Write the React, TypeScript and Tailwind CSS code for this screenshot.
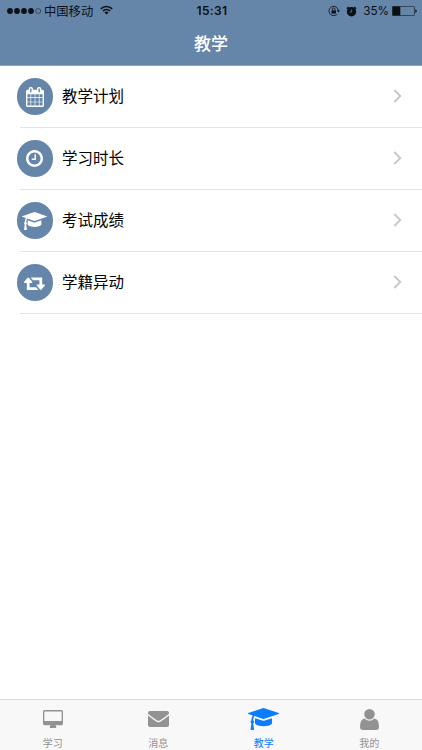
import React, { useState } from 'react';
import clsx from 'clsx';

type IconName = 'calendar' | 'clock' | 'cap' | 'retweet' | 'desktop' | 'envelope' | 'user';

const icons: Record<IconName, { viewBox: string; path: string }> = {
  calendar: {
    viewBox: '64 0 1664 1792',
    path: 'M192 1664h288v-288h-288v288zm352 0h320v-288h-320v288zm-352-352h288v-320h-288v320zm352 0h320v-320h-320v320zm-352-384h288v-288h-288v288zm736 736h320v-288h-320v288zm-384-736h320v-288h-320v288zm768 736h288v-288h-288v288zm-384-352h320v-320h-320v320zm-352-864v-288q0-13-9.5-22.5t-22.5-9.5h-64q-13 0-22.5 9.5t-9.5 22.5v288q0 13 9.5 22.5t22.5 9.5h64q13 0 22.5-9.5t9.5-22.5zm736 864h288v-320h-288v320zm-384-384h320v-288h-320v288zm384 0h288v-288h-288v288zm32-480v-288q0-13-9.5-22.5t-22.5-9.5h-64q-13 0-22.5 9.5t-9.5 22.5v288q0 13 9.5 22.5t22.5 9.5h64q13 0 22.5-9.5t9.5-22.5zm384-64v1280q0 52-38 90t-90 38h-1408q-52 0-90-38t-38-90v-1280q0-52 38-90t90-38h128v-96q0-66 47-113t113-47h64q66 0 113 47t47 113v96h384v-96q0-66 47-113t113-47h64q66 0 113 47t47 113v96h128q52 0 90 38t38 90z',
  },
  clock: {
    viewBox: '128 128 1536 1536',
    path: 'M1024 544v448q0 14-9 23t-23 9h-320q-14 0-23-9t-9-23v-64q0-14 9-23t23-9h224v-352q0-14 9-23t23-9h64q14 0 23 9t9 23zm416 352q0-148-73-273t-198-198-273-73-273 73-198 198-73 273 73 273 198 198 273 73 273-73 198-198 73-273zm224 0q0 209-103 385.5t-279.5 279.5-385.5 103-385.5-103-279.5-279.5-103-385.5 103-385.5 279.5-279.5 385.5-103 385.5 103 279.5 279.5 103 385.5z',
  },
  cap: {
    viewBox: '0 128 2304 1536',
    path: 'M1774 836l18 316q4 69-82 128t-235 93.5-323 34.5-323-34.5-235-93.5-82-128l18-316 574 181q22 7 48 7t48-7zm530-324q0 23-22 31l-1120 352q-4 1-10 1t-10-1l-652-206q-43 34-71 111.5t-34 178.5q63 36 63 109 0 69-58 107l58 433q2 14-8 25-9 11-24 11h-192q-15 0-24-11-10-11-8-25l58-433q-58-38-58-107 0-73 65-111 11-207 98-330l-333-104q-22-8-22-31t22-31l1120-352q4-1 10-1t10 1l1120 352q22 8 22 31z',
  },
  retweet: {
    viewBox: '0 256 1920 1280',
    path: 'M1280 1504q0 13-9.5 22.5t-22.5 9.5h-960q-8 0-13.5-2t-9-7-5.5-8-3-11.5-1-11.5v-600h-192q-26 0-45-19t-19-45q0-24 15-41l320-384q19-22 49-22t49 22l320 384q15 17 15 41 0 26-19 45t-45 19h-192v384h576q16 0 25 11l160 192q7 10 7 21zm640-416q0 24-15 41l-320 384q-20 23-49 23t-49-23l-320-384q-15-17-15-41 0-26 19-45t45-19h192v-384h-576q-16 0-25-12l-160-192q-7-9-7-20 0-13 9.5-22.5t22.5-9.5h960q8 0 13.5 2t9 7 5.5 8 3 11.5 1 11.5v600h192q26 0 45 19t19 45z',
  },
  desktop: {
    viewBox: '0 0 1920 1664',
    path: 'M1792 992v-832q0-13-9.5-22.5t-22.5-9.5h-1600q-13 0-22.5 9.5t-9.5 22.5v832q0 13 9.5 22.5t22.5 9.5h1600q13 0 22.5-9.5t9.5-22.5zm128-832v1088q0 66-47 113t-113 47h-544q0 37 16 77.5t32 71 16 43.5q0 26-19 45t-45 19h-512q-26 0-45-19t-19-45q0-14 16-44t32-70 16-78h-544q-66 0-113-47t-47-113v-1088q0-66 47-113t113-47h1600q66 0 113 47t47 113z',
  },
  envelope: {
    viewBox: '0 0 21 16',
    path: 'M2 0h17q2 0 2 2v.7q-4.6 3.9-9.1 6.7-1.4.8-2.8 0Q4.6 6.600 0 2.7V2q0-2 2-2zM0 4.500q4.300 3.500 8.600 6.300 1.900 1.100 3.800 0Q16.700 8 21 4.500V14q0 2-2 2H2q-2 0-2-2z',
  },
  user: {
    viewBox: '0 0 19 21',
    path: 'M4.700 9.500q2 2.200 4.800 2.200t4.800-2.200q4.700.400 4.700 8.300 0 3.200-3.200 3.200H3.200Q0 21 0 17.800 0 9.900 4.700 9.500zM9.500 0a5.300 5.300 0 1 1 0 10.600 5.300 5.300 0 0 1 0-10.600z',
  },
};

interface MenuItem {
  label: string;
  icon: IconName;
  size: string;
}

const menuItems: MenuItem[] = [
  { label: '教学计划', icon: 'calendar', size: 'w-[18px] h-[20px]' },
  { label: '学习时长', icon: 'clock', size: 'w-[17px] h-[17px]' },
  { label: '考试成绩', icon: 'cap', size: 'w-[25px] h-[18px]' },
  { label: '学籍异动', icon: 'retweet', size: 'w-[21px] h-[14px]' },
];

const tabs: MenuItem[] = [
  { label: '学习', icon: 'desktop', size: 'w-[20px] h-[18px]' },
  { label: '消息', icon: 'envelope', size: 'w-[21px] h-[16px]' },
  { label: '教学', icon: 'cap', size: 'w-[31px] h-[22px]' },
  { label: '我的', icon: 'user', size: 'w-[19px] h-[21px]' },
];

const Icon = ({ name, className }: { name: IconName; className: string }) => (
  <svg viewBox={icons[name].viewBox} preserveAspectRatio="none" fill="currentColor" className={className}>
    <path d={icons[name].path} />
  </svg>
);

const StatusBar = () => (
  <div className="grid grid-cols-[1fr_auto_1fr] items-center h-[22px] text-[12px] leading-[22px] text-[#0b0f16]">
    <div className="flex items-center pl-[7px]">
      <svg viewBox="0 0 35 8" className="w-[35px] h-[8px]">
        {[3, 10, 17, 24].map((x) => (
          <circle key={x} cx={x} cy="4" r="2.9" fill="currentColor" />
        ))}
        <circle cx="31.2" cy="4" r="2.5" fill="none" stroke="currentColor" strokeWidth="0.5" />
      </svg>
      <span className="ml-[2px] text-[12.3px]">中国移动</span>
      <svg viewBox="0 0 13 10" className="w-[13px] h-[10px] ml-[7px] -mt-[2px]" fill="none" stroke="currentColor" strokeWidth="1.7">
        <path d="M0.8 3.8a8.2 8.2 0 0 1 11.4 0M2.9 6a5.2 5.2 0 0 1 7.2 0" />
        <path d="M6.5 9.5L4.4 7.5a3 3 0 0 1 4.2 0z" fill="currentColor" stroke="none" />
      </svg>
    </div>
    <span className="pl-[2px] font-semibold font-['Inter'] text-[12px] tracking-[0.35px]">15:31</span>
    <div className="flex items-center justify-end pr-[5px]">
      <svg viewBox="0 0 12 12" className="w-[12px] h-[12px]" fill="none" stroke="currentColor" strokeWidth="0.8">
        <path d="M8.9 9.4A4.7 4.7 0 1 1 10.3 5.2" />
        <path d="M8.8 5.3h3.2L10.4 7.4z" fill="currentColor" stroke="none" />
        <path d="M3.5 5.4h4.4v3.2H3.5z" fill="currentColor" stroke="none" />
        <path d="M4.4 5.5V4.2a1.3 1.3 0 0 1 2.6 0v1.3" />
      </svg>
      <svg viewBox="0 0 11 11" className="w-[11px] h-[11px] ml-[6px]">
        <circle cx="5.5" cy="5.8" r="4.7" fill="currentColor" />
        <path d="M0.9 2.7L2.8 1M10.1 2.7L8.2 1" stroke="currentColor" strokeWidth="1.4" />
        <path d="M5.6 3.3v2.8H3.6" fill="none" stroke="#6686a9" strokeWidth="0.7" />
      </svg>
      <span className="ml-[6px] font-['Inter'] text-[11.7px]">35%</span>
      <svg viewBox="0 0 25 10" className="w-[25px] h-[10px] ml-[3px]">
        <rect x="0.4" y="0.4" width="22" height="9.2" rx="0.8" fill="none" stroke="currentColor" strokeWidth="0.6" />
        <rect x="0.5" y="0.5" width="7.8" height="9" fill="currentColor" />
        <path d="M23.3 3.2q1.4.4 1.4 1.8t-1.4 1.8z" fill="currentColor" />
      </svg>
    </div>
  </div>
);

const MenuRow = ({ item }: { item: MenuItem }) => (
  <li className="pl-5">
    <button className="flex items-center w-full h-[62px] border-b border-[#e3e3e5] text-left">
      <span className="flex items-center justify-center w-[36.5px] h-[36.5px] -ml-[3.5px] rounded-full bg-[#6686a9] text-white">
        <Icon name={item.icon} className={item.size} />
      </span>
      <span className="ml-[9px] pb-px text-[15.5px] text-black">{item.label}</span>
      <svg viewBox="0 0 9 14" className="w-[9px] h-[14px] ml-auto mr-[20px] -mt-px" fill="none" stroke="#c7c7cc" strokeWidth="1.9">
        <path d="M1.3 1l6 6-6 6" />
      </svg>
    </button>
  </li>
);

export default function App() {
  const [active, setActive] = useState('教学');

  return (
    <div className="flex flex-col h-screen bg-white overflow-hidden font-['Noto_Sans_CJK_SC',sans-serif]">
      <header className="h-[66px] shrink-0 bg-[#6686a9] border-b border-[#8ba3bd]">
        <StatusBar />
        <h1 className="text-center text-[17px] leading-[42px] font-medium text-white">教学</h1>
      </header>

      <ul className="flex-1">
        {menuItems.map((item) => (
          <MenuRow key={item.label} item={item} />
        ))}
      </ul>

      <nav className="grid grid-cols-4 h-[51px] shrink-0 border-t border-[#dcdcdd] bg-[#f8f8f8]">
        {tabs.map((tab) => (
          <button
            key={tab.label}
            onClick={() => setActive(tab.label)}
            className={clsx('flex flex-col items-center', active === tab.label ? 'text-[#0a7dff]' : 'text-[#929292]')}
          >
            <span className="flex items-center justify-center h-[38px]">
              <Icon name={tab.icon} className={tab.size} />
            </span>
            <span className="text-[10px] leading-[10px]">{tab.label}</span>
          </button>
        ))}
      </nav>
    </div>
  );
}
